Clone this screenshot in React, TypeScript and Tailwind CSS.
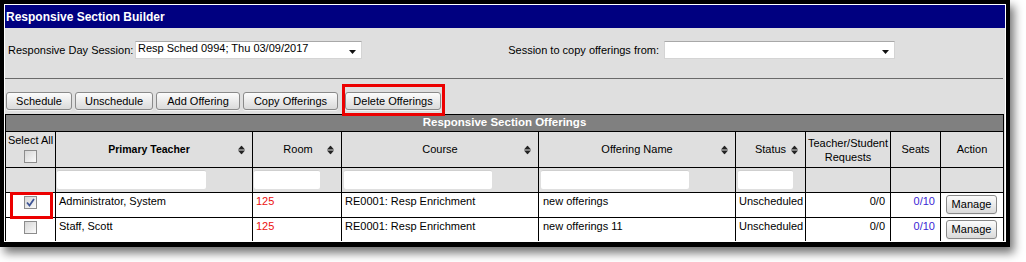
import React from 'react'

const font = "font-['Liberation_Sans',Arial,sans-serif]"

function SortIcon() {
  return (
    <svg width="7" height="9" viewBox="0 0 7 9" className="absolute right-[7px] top-1/2 -translate-y-1/2">
      <polygon points="0,4 3.5,0 7,4" fill="#222" />
      <polygon points="0,5 7,5 3.5,9" fill="#222" />
    </svg>
  )
}

function Checkbox({ checked = false }: { checked?: boolean }) {
  return (
    <div className="w-[13px] h-[13px] border border-[#8c8c8c] bg-gradient-to-br from-[#d6d6d6] to-[#fbfbfb] flex items-center justify-center">
      {checked && (
        <svg width="9" height="9" viewBox="0 0 9 9">
          <path d="M1 4.5 L3.5 7.5 L8 1" stroke="#3f5596" strokeWidth="1.8" fill="none" />
        </svg>
      )}
    </div>
  )
}

function Btn({ label, w, className = '' }: { label: string; w: string; className?: string }) {
  return (
    <button
      className={`${w} h-[18px] rounded-[3px] border border-[#8a8a8a] bg-gradient-to-b from-[#fcfcfc] to-[#dadada] text-[11px] leading-none text-black flex items-center justify-center shadow-[0_1px_0_#f4f4f4] ${className}`}
    >
      {label}
    </button>
  )
}

function FakeSelect({ value, w }: { value: string; w: string }) {
  return (
    <div className={`${w} h-[18px] bg-white border border-[#d4d4d4] border-t-[#a8a8a8] flex items-start pl-[2px] pr-[5px]`}>
      <span className="flex-1 text-[11px] leading-[13px] pt-[0px] text-black">{value}</span>
      <svg width="7" height="4" viewBox="0 0 7 4" className="self-center mt-[4px]">
        <polygon points="0,0 7,0 3.5,4" fill="#111" />
      </svg>
    </div>
  )
}

const cols = ['w-[50px]', 'w-[197px]', 'w-[89px]', 'w-[197px]', 'w-[197px]', 'w-[70px]', 'w-[85px]', 'w-[50px]', 'w-[63px]']

const rows = [
  { teacher: 'Administrator, System', room: '125', course: 'RE0001: Resp Enrichment', offering: 'new offerings', status: 'Unscheduled', req: '0/0', seats: '0/10', checked: true },
  { teacher: 'Staff, Scott', room: '125', course: 'RE0001: Resp Enrichment', offering: 'new offerings 11', status: 'Unscheduled', req: '0/0', seats: '0/10', checked: false },
]

export default function App() {
  return (
    <div className={`w-[1026px] h-[262px] bg-white overflow-hidden ${font}`}>
      <div className="w-[1010px] h-[247px] border-black border-t-4 border-x-4 border-b-[5px] shadow-[4px_6px_9px_rgba(0,0,0,0.55)]">
        <div className="w-full h-full border border-white bg-[#dfdfdf] flex flex-col overflow-hidden">
          {/* title */}
          <div className="h-[23px] shrink-0 bg-[#000080] text-white font-bold text-[12px] flex items-center pl-[1px]">
            Responsive Section Builder
          </div>

          {/* session selects */}
          <div className="mt-[13px] h-[18px] shrink-0 flex items-center text-[11px] text-black">
            <span className="w-[130px] pl-[3px]">Responsive Day Session:</span>
            <FakeSelect value="Resp Sched 0994; Thu 03/09/2017" w="w-[227px]" />
            <div className="flex-1" />
            <span className="mr-[5px]">Session to copy offerings from:</span>
            <FakeSelect value="" w="w-[231px]" />
            <div className="w-[110px]" />
          </div>

          <div className="mt-[19px] w-[998px] h-px shrink-0 bg-[#6a6a6a]" />

          {/* buttons */}
          <div className="mt-[13px] h-[18px] shrink-0 flex pl-[1px]">
            <Btn label="Schedule" w="w-[66px]" />
            <Btn label="Unschedule" w="w-[78px]" className="ml-[3px]" />
            <Btn label="Add Offering" w="w-[84px]" className="ml-[3px]" />
            <Btn label="Copy Offerings" w="w-[95px]" className="ml-[3px]" />
            <div className="relative ml-[7px]">
              <Btn label="Delete Offerings" w="w-[96px]" />
              <div className="absolute -left-[3px] -right-[4px] -top-[8px] -bottom-[6px] border-[3px] border-[#ec0000] z-10 pointer-events-none" />
            </div>
          </div>

          {/* table */}
          <div className="mt-[4px] w-[999px] shrink-0 text-[11px] text-black">
            <div className="h-[18px] border border-black bg-[#808080] text-white font-bold text-[11.5px] flex items-center justify-center">
              Responsive Section Offerings
            </div>

            {/* header row */}
            <div className="flex h-[36px] border-l border-b border-black bg-[#dfdfdf]">
              <div className={`${cols[0]} border-r border-black flex flex-col items-center pt-[2px]`}>
                <span className="leading-[13px]">Select All</span>
                <div className="mt-[3px]"><Checkbox /></div>
              </div>
              <div className={`${cols[1]} relative border-r border-black flex items-center justify-center pr-[10px] font-bold text-[10.5px]`}>
                Primary Teacher<SortIcon />
              </div>
              <div className={`${cols[2]} relative border-r border-black flex items-center justify-center pl-[2px]`}>
                Room<SortIcon />
              </div>
              <div className={`${cols[3]} relative border-r border-black flex items-center justify-center`}>
                Course<SortIcon />
              </div>
              <div className={`${cols[4]} relative border-r border-black flex items-center justify-center`}>
                Offering Name<SortIcon />
              </div>
              <div className={`${cols[5]} relative border-r border-black flex items-center justify-center`}>
                Status<SortIcon />
              </div>
              <div className={`${cols[6]} border-r border-black flex items-center justify-center text-center leading-[14px]`}>
                Teacher/Student<br />Requests
              </div>
              <div className={`${cols[7]} border-r border-black flex items-center justify-center`}>Seats</div>
              <div className={`${cols[8]} border-r border-black flex items-center justify-center`}>Action</div>
            </div>

            {/* filter row */}
            <div className="flex h-[25px] border-l border-b border-black bg-[#dfdfdf]">
              <div className={`${cols[0]} border-r border-black`} />
              <div className={`${cols[1]} border-r border-black pt-[2px] pl-[1px]`}>
                <div className="w-[149px] h-[19px] bg-white rounded-[2px] border-t border-[#cfcfcf]" />
              </div>
              <div className={`${cols[2]} border-r border-black pt-[2px] pl-[1px]`}>
                <div className="w-[66px] h-[19px] bg-white rounded-[2px] border-t border-[#cfcfcf]" />
              </div>
              <div className={`${cols[3]} border-r border-black pt-[2px] pl-[2px]`}>
                <div className="w-[148px] h-[19px] bg-white rounded-[2px] border-t border-[#cfcfcf]" />
              </div>
              <div className={`${cols[4]} border-r border-black pt-[2px] pl-[2px]`}>
                <div className="w-[148px] h-[19px] bg-white rounded-[2px] border-t border-[#cfcfcf]" />
              </div>
              <div className={`${cols[5]} border-r border-black pt-[2px] pl-[2px]`}>
                <div className="w-[55px] h-[19px] bg-white rounded-[2px] border-t border-[#cfcfcf]" />
              </div>
              <div className={`${cols[6]} border-r border-black`} />
              <div className={`${cols[7]} border-r border-black`} />
              <div className={`${cols[8]} border-r border-black`} />
            </div>

            {/* data rows */}
            {rows.map((r, i) => (
              <div key={i} className="flex h-[25px] border-l border-b border-black bg-white leading-[13px]">
                <div className={`${cols[0]} relative border-r border-black flex justify-center pt-[3px]`}>
                  <Checkbox checked={r.checked} />
                  {r.checked && (
                    <div className="absolute left-[4px] right-[2px] -top-[1px] -bottom-[2px] border-[3px] border-[#ec0000] z-10" />
                  )}
                </div>
                <div className={`${cols[1]} border-r border-black pl-[3px] pt-[2px]`}>{r.teacher}</div>
                <div className={`${cols[2]} border-r border-black pl-[3px] pt-[2px] text-[#ec1010]`}>{r.room}</div>
                <div className={`${cols[3]} border-r border-black pl-[3px] pt-[2px]`}>{r.course}</div>
                <div className={`${cols[4]} border-r border-black pl-[4px] pt-[2px]`}>{r.offering}</div>
                <div className={`${cols[5]} border-r border-black pl-[3px] pt-[2px]`}>{r.status}</div>
                <div className={`${cols[6]} border-r border-black pr-[5px] pt-[2px] text-right`}>{r.req}</div>
                <div className={`${cols[7]} border-r border-black pr-[5px] pt-[2px] text-right text-[#3a1fd4]`}>{r.seats}</div>
                <div className={`${cols[8]} border-r border-black pl-[5px] pt-[2px]`}>
                  <Btn label="Manage" w="w-[51px] h-[19px]" />
                </div>
              </div>
            ))}
          </div>
        </div>
      </div>
    </div>
  )
}
